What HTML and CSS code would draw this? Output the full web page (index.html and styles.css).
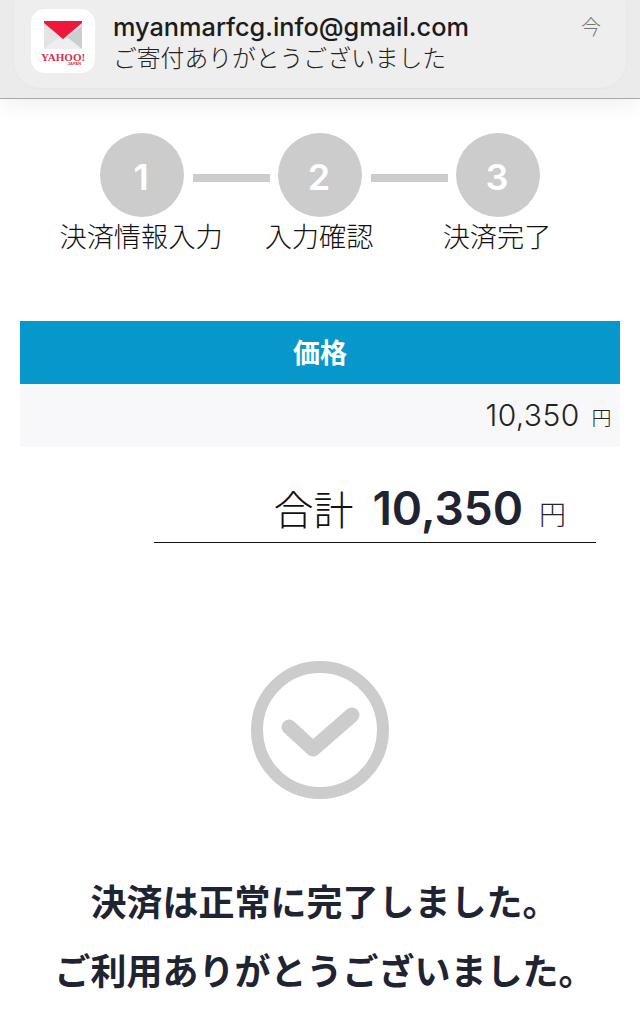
FILE: index.html
```html
<!DOCTYPE html>
<html lang="ja">
<head>
    <meta charset="UTF-8">
    <meta name="viewport" content="width=device-width, initial-scale=1.0">
    <title>決済完了</title>
    <link rel="stylesheet" href="styles.css">
</head>
<body>
    <!-- Notification banner -->
    <div class="notice-bar">
        <div class="notice">
            <div class="app-icon">
                <svg class="mail-icon" width="38" height="28" viewBox="0 0 38 28">
                    <rect x="0" y="0" width="38" height="28" fill="#e4e4e4"/>
                    <path d="M38 5 L22 17 L38 28 Z" fill="#cdcdcd"/>
                    <path d="M0 28 L15 16 L19 19 L23 16 L38 28 Z" fill="#eeeeee"/>
                    <path d="M0 0 H38 V2 L19 18 L0 2 Z" fill="#f0173c"/>
                </svg>
                <div class="yahoo">YAHOO!</div>
                <div class="yahoo-jp">JAPAN</div>
            </div>
            <div class="notice-text">
                <div class="notice-from">myanmarfcg.info@gmail.com</div>
                <div class="notice-body">ご寄付ありがとうございました</div>
            </div>
            <div class="notice-time">今</div>
        </div>
    </div>

    <!-- Steps -->
    <div class="steps">
        <div class="step">
            <div class="step-num">1</div>
            <div class="step-label">決済情報入力</div>
        </div>
        <div class="step-line"></div>
        <div class="step">
            <div class="step-num">2</div>
            <div class="step-label">入力確認</div>
        </div>
        <div class="step-line"></div>
        <div class="step">
            <div class="step-num">3</div>
            <div class="step-label">決済完了</div>
        </div>
    </div>

    <!-- Price -->
    <div class="price-table">
        <div class="price-head">価格</div>
        <div class="price-row">10,350<span class="yen">円</span></div>
    </div>

    <div class="total-wrap">
        <div class="total">
            <span class="total-label">合計</span>
            <span class="total-num">10,350</span>
            <span class="total-yen">円</span>
        </div>
    </div>

    <div class="done-icon">
        <svg width="140" height="140" viewBox="0 0 140 140">
            <circle cx="70" cy="70" r="63" fill="none" stroke="#cccccc" stroke-width="12"/>
            <path d="M39 67 L63 89 L102 55" fill="none" stroke="#cccccc" stroke-width="15" stroke-linecap="round" stroke-linejoin="round"/>
        </svg>
    </div>

    <div class="done-msg">
        <p>決済は正常に完了しました。</p>
        <p>ご利用ありがとうございました。</p>
    </div>
</body>
</html>
```

FILE: styles.css
```css
body {
    margin: 0;
    background-color: #fff;
    color: #1f2433;
    font-family: "Inter", "Noto Sans CJK JP", sans-serif;
    overflow: hidden;
}

/* Notification banner */
.notice-bar {
    height: 99px;
    padding: 0 14px 10px;
    box-sizing: border-box;
    background-color: #ebebeb;
    border-bottom: 1px solid #a9a9a9;
    box-shadow: 0 4px 22px rgba(0, 0, 0, 0.07);
}

.notice {
    display: flex;
    height: 88px;
    padding: 9px 25px 0 17px;
    box-sizing: border-box;
    background-color: #eeeeee;
    border-radius: 0 0 26px 26px;
    box-shadow: 0 1px 3px rgba(0, 0, 0, 0.03);
}

.app-icon {
    flex: none;
    display: flex;
    flex-direction: column;
    align-items: center;
    width: 64px;
    height: 64px;
    padding-top: 12px;
    box-sizing: border-box;
    background-color: #fff;
    border-radius: 14px;
}

.mail-icon {
    display: block;
}

.yahoo {
    margin-top: 4px;
    font-family: "Liberation Serif", serif;
    font-size: 11px;
    font-weight: bold;
    line-height: 9px;
    color: #d8304a;
}

.yahoo-jp {
    margin-left: 23px;
    font-family: "Liberation Sans", sans-serif;
    font-size: 4px;
    font-weight: bold;
    line-height: 4px;
    color: #d8304a;
}

.notice-text {
    flex: 1;
    margin-left: 18px;
}

.notice-from {
    margin-top: 3px;
    font-size: 25.3px;
    font-weight: 500;
    line-height: 30px;
    color: #1c1c1c;
}

.notice-body {
    margin-top: 1px;
    font-family: "Noto Sans CJK JP", sans-serif;
    font-size: 23.8px;
    font-weight: 300;
    line-height: 27px;
    color: #222;
}

.notice-time {
    margin-top: 6px;
    font-family: "Noto Sans CJK JP", sans-serif;
    font-size: 20px;
    font-weight: 300;
    line-height: 24px;
    color: #777;
}

/* Steps */
.steps {
    display: flex;
    justify-content: center;
    margin-top: 34px;
    height: 188px;
}

.step {
    display: flex;
    flex-direction: column;
    align-items: center;
    width: 84px;
}

.step-num {
    flex: none;
    width: 84px;
    height: 84px;
    padding-right: 2px;
    box-sizing: border-box;
    background-color: #cccccc;
    border-radius: 50%;
    color: #fff;
    font-size: 36px;
    font-weight: 600;
    line-height: 88px;
    text-align: center;
}

.step-label {
    margin-right: 2px;
    font-family: "Noto Sans CJK JP", sans-serif;
    font-size: 27.2px;
    font-weight: 300;
    line-height: 36px;
    color: #111;
    white-space: nowrap;
}

.step-line {
    flex: none;
    width: 77px;
    height: 8px;
    margin: 41px 8.5px 0;
    background-color: #cccccc;
}

/* Price table */
.price-table {
    margin: 0 20px;
}

.price-head {
    height: 63px;
    background-color: #0698cb;
    color: #fff;
    font-family: "Noto Sans CJK JP", sans-serif;
    font-size: 27px;
    font-weight: bold;
    line-height: 61px;
    text-align: center;
}

.price-row {
    height: 63px;
    padding-right: 8px;
    background-color: #f8f8fa;
    font-size: 30px;
    font-weight: 300;
    letter-spacing: 0.4px;
    line-height: 62px;
    text-align: right;
    color: #222;
}

.yen {
    margin-left: 12px;
    font-family: "Noto Sans CJK JP", sans-serif;
    font-size: 20px;
    font-weight: 300;
}

/* Total */
.total-wrap {
    display: flex;
    justify-content: flex-end;
    margin: 32px 44px 0 0;
}

.total {
    display: flex;
    align-items: baseline;
    justify-content: flex-end;
    width: 442px;
    height: 64px;
    padding-right: 30px;
    box-sizing: border-box;
    border-bottom: 1px solid #111;
    line-height: 58px;
}

.total-label {
    font-family: "Noto Sans CJK JP", sans-serif;
    font-size: 40px;
    font-weight: 300;
    color: #111;
}

.total-num {
    margin-left: 19px;
    font-size: 46px;
    font-weight: 600;
}

.total-yen {
    margin-left: 16px;
    font-family: "Noto Sans CJK JP", sans-serif;
    font-size: 27px;
    font-weight: 300;
}

/* Complete */
.done-icon {
    display: flex;
    justify-content: center;
    margin-top: 117px;
}

.done-icon svg {
    display: block;
}

.done-msg {
    margin-top: 66px;
    padding-left: 9px;
    font-family: "Noto Sans CJK JP", sans-serif;
    font-size: 36px;
    font-weight: bold;
    text-align: center;
}

.done-msg p {
    margin: 0;
    height: 69px;
    line-height: 69px;
}
```
